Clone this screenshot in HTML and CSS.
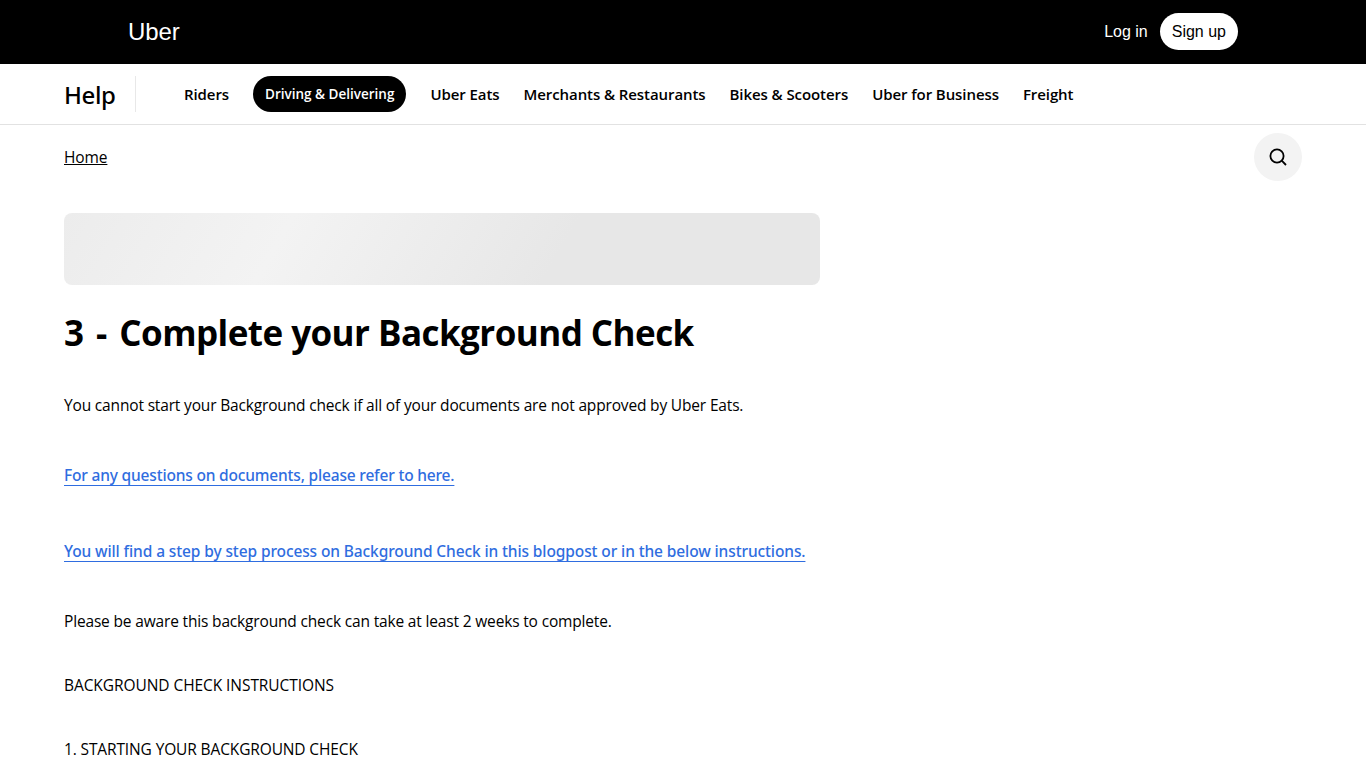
FILE: index.html
```html
<!DOCTYPE html>
<html lang="en">
<head>
<meta charset="utf-8">
<title>3 - Complete your Background Check</title>
<link rel="stylesheet" href="styles.css">
</head>
<body>
<header class="topbar">
  <a class="brand">Uber</a>
  <div class="auth">
    <a class="login">Log in</a>
    <a class="signup">Sign up</a>
  </div>
</header>
<nav class="helpnav">
  <div class="helpword">Help</div>
  <div class="tabs">
    <a class="tab">Riders</a>
    <a class="tab active">Driving &amp; Delivering</a>
    <a class="tab">Uber Eats</a>
    <a class="tab">Merchants &amp; Restaurants</a>
    <a class="tab">Bikes &amp; Scooters</a>
    <a class="tab">Uber for Business</a>
    <a class="tab">Freight</a>
  </div>
</nav>
<div class="crumbrow">
  <a class="crumb">Home</a>
  <button class="searchbtn" aria-label="Search">
    <svg width="20" height="20" viewBox="0 0 20 20" fill="none" stroke="#000" stroke-width="1.8"><circle cx="9" cy="9" r="6.6"/><path d="M13.7 13.7 18 18"/></svg>
  </button>
</div>
<main class="article">
  <div class="skeleton"></div>
  <h1><span class="step">3 - </span>Complete your Background Check</h1>
  <p class="p1">You cannot start your Background check if all of your documents are not approved by Uber Eats.</p>
  <p class="p2"><a class="link">For any questions on documents, please refer to here.</a></p>
  <p class="p3"><a class="link">You will find a step by step process on Background Check in this blogpost or in the below instructions.</a></p>
  <p class="p4">Please be aware this background check can take at least 2 weeks to complete.</p>
  <p class="p5">BACKGROUND CHECK INSTRUCTIONS</p>
  <p class="p6">1. STARTING YOUR BACKGROUND CHECK</p>
</main>
</body>
</html>
```
FILE: styles.css
```css
* { box-sizing: border-box; }
html, body { margin: 0; height: 768px; overflow: hidden; }
body { background: #fff; color: #000; font-family: "Open Sans", "Noto Sans", sans-serif; font-size: 16px; }
.topbar { height: 64px; background: #000; display: flex; align-items: center; justify-content: space-between; padding: 0 128px; font-family: "Liberation Sans", Arial, sans-serif; }
.brand { color: #fff; font-size: 24px; letter-spacing: -0.1px; }
.auth { display: flex; align-items: center; gap: 12px; font-size: 16px; margin-top: -1px; }
.login { color: #fff; }
.signup { background: #fff; color: #000; height: 37px; line-height: 37px; padding: 0 12px; border-radius: 19px; }
.helpnav { height: 61px; border-bottom: 1px solid #e2e2e2; display: flex; align-items: center; padding: 0 64px; }
.helpword { font-family: "Noto Sans", sans-serif; font-size: 24px; font-weight: 500; width: 72px; height: 36px; line-height: 38px; border-right: 1px solid #e8e8e8; margin-right: 48px; letter-spacing: -0.4px; }
.tabs { display: flex; align-items: center; gap: 24px; }
.tab { font-size: 15px; font-weight: 600; letter-spacing: -0.08px; height: 36px; line-height: 36px; white-space: nowrap; }
.tab.active { background: #000; color: #fff; font-size: 13.5px; letter-spacing: 0; padding: 0 12px; border-radius: 18px; }
.crumbrow { display: flex; justify-content: space-between; padding: 8px 64px 0; height: 88px; }
.crumb { font-size: 15.5px; letter-spacing: -0.1px; text-decoration: underline; height: 48px; line-height: 48px; }
.searchbtn { width: 48px; height: 48px; border: 0; border-radius: 50%; background: #f3f3f3; display: flex; align-items: center; justify-content: center; padding: 0; }
.article { padding: 0 64px; width: 884px; }
.skeleton { height: 72px; border-radius: 8px; background: linear-gradient(120deg, #ececec 0%, #f3f3f3 29%, #e7e7e7 65%, #e7e7e7 100%); }
h1 { font-size: 35px; font-weight: 700; letter-spacing: -0.55px; line-height: 44px; margin: 26px 0 0; }
.step { word-spacing: 4px; }
p { margin: 0; font-size: 15.5px; letter-spacing: -0.165px; line-height: 24px; white-space: nowrap; }
.p1 { margin-top: 38px; }
.p2 { margin-top: 46px; letter-spacing: -0.18px; }
.p3 { margin-top: 52px; letter-spacing: -0.11px; }
.p4 { margin-top: 46px; }
.p5 { margin-top: 40px; letter-spacing: -0.07px; }
.p6 { margin-top: 40px; letter-spacing: -0.13px; }
.link { color: #2f6de0; font-family: "Noto Sans", sans-serif; font-weight: 500; text-decoration: underline 1px #2f6de0; text-underline-offset: 4px; text-decoration-skip-ink: none; }
```
